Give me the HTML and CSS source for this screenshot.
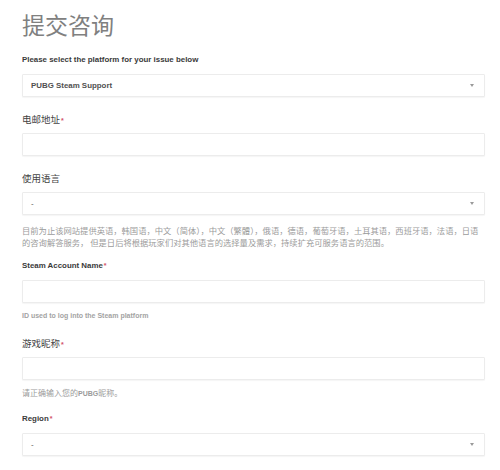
FILE: index.html
```html
<!DOCTYPE html>
<html lang="zh">
<head>
<meta charset="utf-8">
<title>提交咨询</title>
<link rel="stylesheet" href="styles.css">
</head>
<body>
<main class="page">
  <h1 class="title">提交咨询</h1>

  <div class="group">
    <div class="label label-en">Please select the platform for your issue below</div>
    <div class="field select"><span class="value value-en">PUBG Steam Support</span><span class="arrow"></span></div>
  </div>

  <div class="group">
    <div class="label label-cjk">电邮地址<span class="req">*</span></div>
    <div class="field"></div>
  </div>

  <div class="group group-lang">
    <div class="label label-cjk">使用语言</div>
    <div class="field select"><span class="value">-</span><span class="arrow"></span></div>
    <p class="help help-lang">目前为止该网站提供英语，韩国语，中文（简体），中文（繁體），俄语，德语，葡萄牙语，土耳其语，西班牙语，法语，日语<br>的咨询解答服务， 但是日后将根据玩家们对其他语言的选择量及需求，持续扩充可服务语言的范围。</p>
  </div>

  <div class="group group-id">
    <div class="label label-en">Steam Account Name<span class="req">*</span></div>
    <div class="field"></div>
    <p class="help help-en">ID used to log into the Steam platform</p>
  </div>

  <div class="group group-nick">
    <div class="label label-cjk">游戏昵称<span class="req">*</span></div>
    <div class="field"></div>
    <p class="help help-cjk">请正确输入您的<b class="em">PUBG</b>昵称。</p>
  </div>

  <div class="group">
    <div class="label label-en">Region<span class="req">*</span></div>
    <div class="field select"><span class="value">-</span><span class="arrow"></span></div>
  </div>
</main>
</body>
</html>
```

FILE: styles.css
```css
html, body {
  margin: 0;
  padding: 0;
  background: #ffffff;
}

.page {
  width: 463px;
  padding: 9px 0 0 22px;
  font-family: "Liberation Sans", "Noto Sans CJK SC", sans-serif;
  display: flex;
  flex-direction: column;
}

.title {
  height: 30px;
  margin: 0 0 15px 0;
  font-family: "Noto Sans CJK SC", sans-serif;
  font-size: 23px;
  line-height: 30px;
  font-weight: 400;
  color: #808080;
}

.group {
  display: flex;
  flex-direction: column;
  margin-bottom: 16px;
}

.group-lang {
  margin-bottom: 12px;
}

.group-id {
  margin-bottom: 15px;
}

.group-nick {
  margin-bottom: 14px;
}

.label {
  height: 12px;
  line-height: 12px;
  margin-bottom: 8px;
  white-space: nowrap;
  overflow: hidden;
}

.label-en {
  font-size: 7.9px;
  font-weight: 700;
  color: #3a3a3a;
}

.label-cjk {
  font-family: "Noto Sans CJK SC", sans-serif;
  font-size: 9.5px;
  color: #444444;
}

.req {
  color: #d2536a;
  font-family: "Liberation Sans", sans-serif;
  font-weight: 700;
  font-size: 7px;
  margin-left: 1px;
}

.field {
  box-sizing: border-box;
  height: 23px;
  border: 1px solid #ececec;
  border-radius: 1px;
  background: #ffffff;
  box-shadow: 0 1px 1px rgba(0, 0, 0, 0.04);
  display: flex;
  align-items: center;
  padding: 0 10px 0 8px;
}

.select {
  justify-content: space-between;
}

.value {
  font-size: 8px;
  color: #555555;
}

.value-en {
  font-weight: 700;
  font-size: 7.9px;
  color: #505050;
}

.arrow {
  width: 0;
  height: 0;
  border-left: 2px solid transparent;
  border-right: 2px solid transparent;
  border-top: 3px solid #9a9a9a;
}

.help {
  margin: 0;
  height: 12px;
  line-height: 12px;
  color: #9b9b9b;
  white-space: nowrap;
  overflow: visible;
}

.help-lang {
  height: 24px;
  margin-top: 9px;
  font-family: "Noto Sans CJK SC", sans-serif;
  font-size: 8.3px;
}

.help-en {
  margin-top: 7px;
  font-size: 7px;
  font-weight: 700;
  color: #a3a3a3;
}

.help-cjk {
  margin-top: 7px;
  font-family: "Noto Sans CJK SC", sans-serif;
  font-size: 8px;
}

.em {
  font-family: "Liberation Sans", sans-serif;
  font-weight: 700;
  font-size: 7px;
}
```
